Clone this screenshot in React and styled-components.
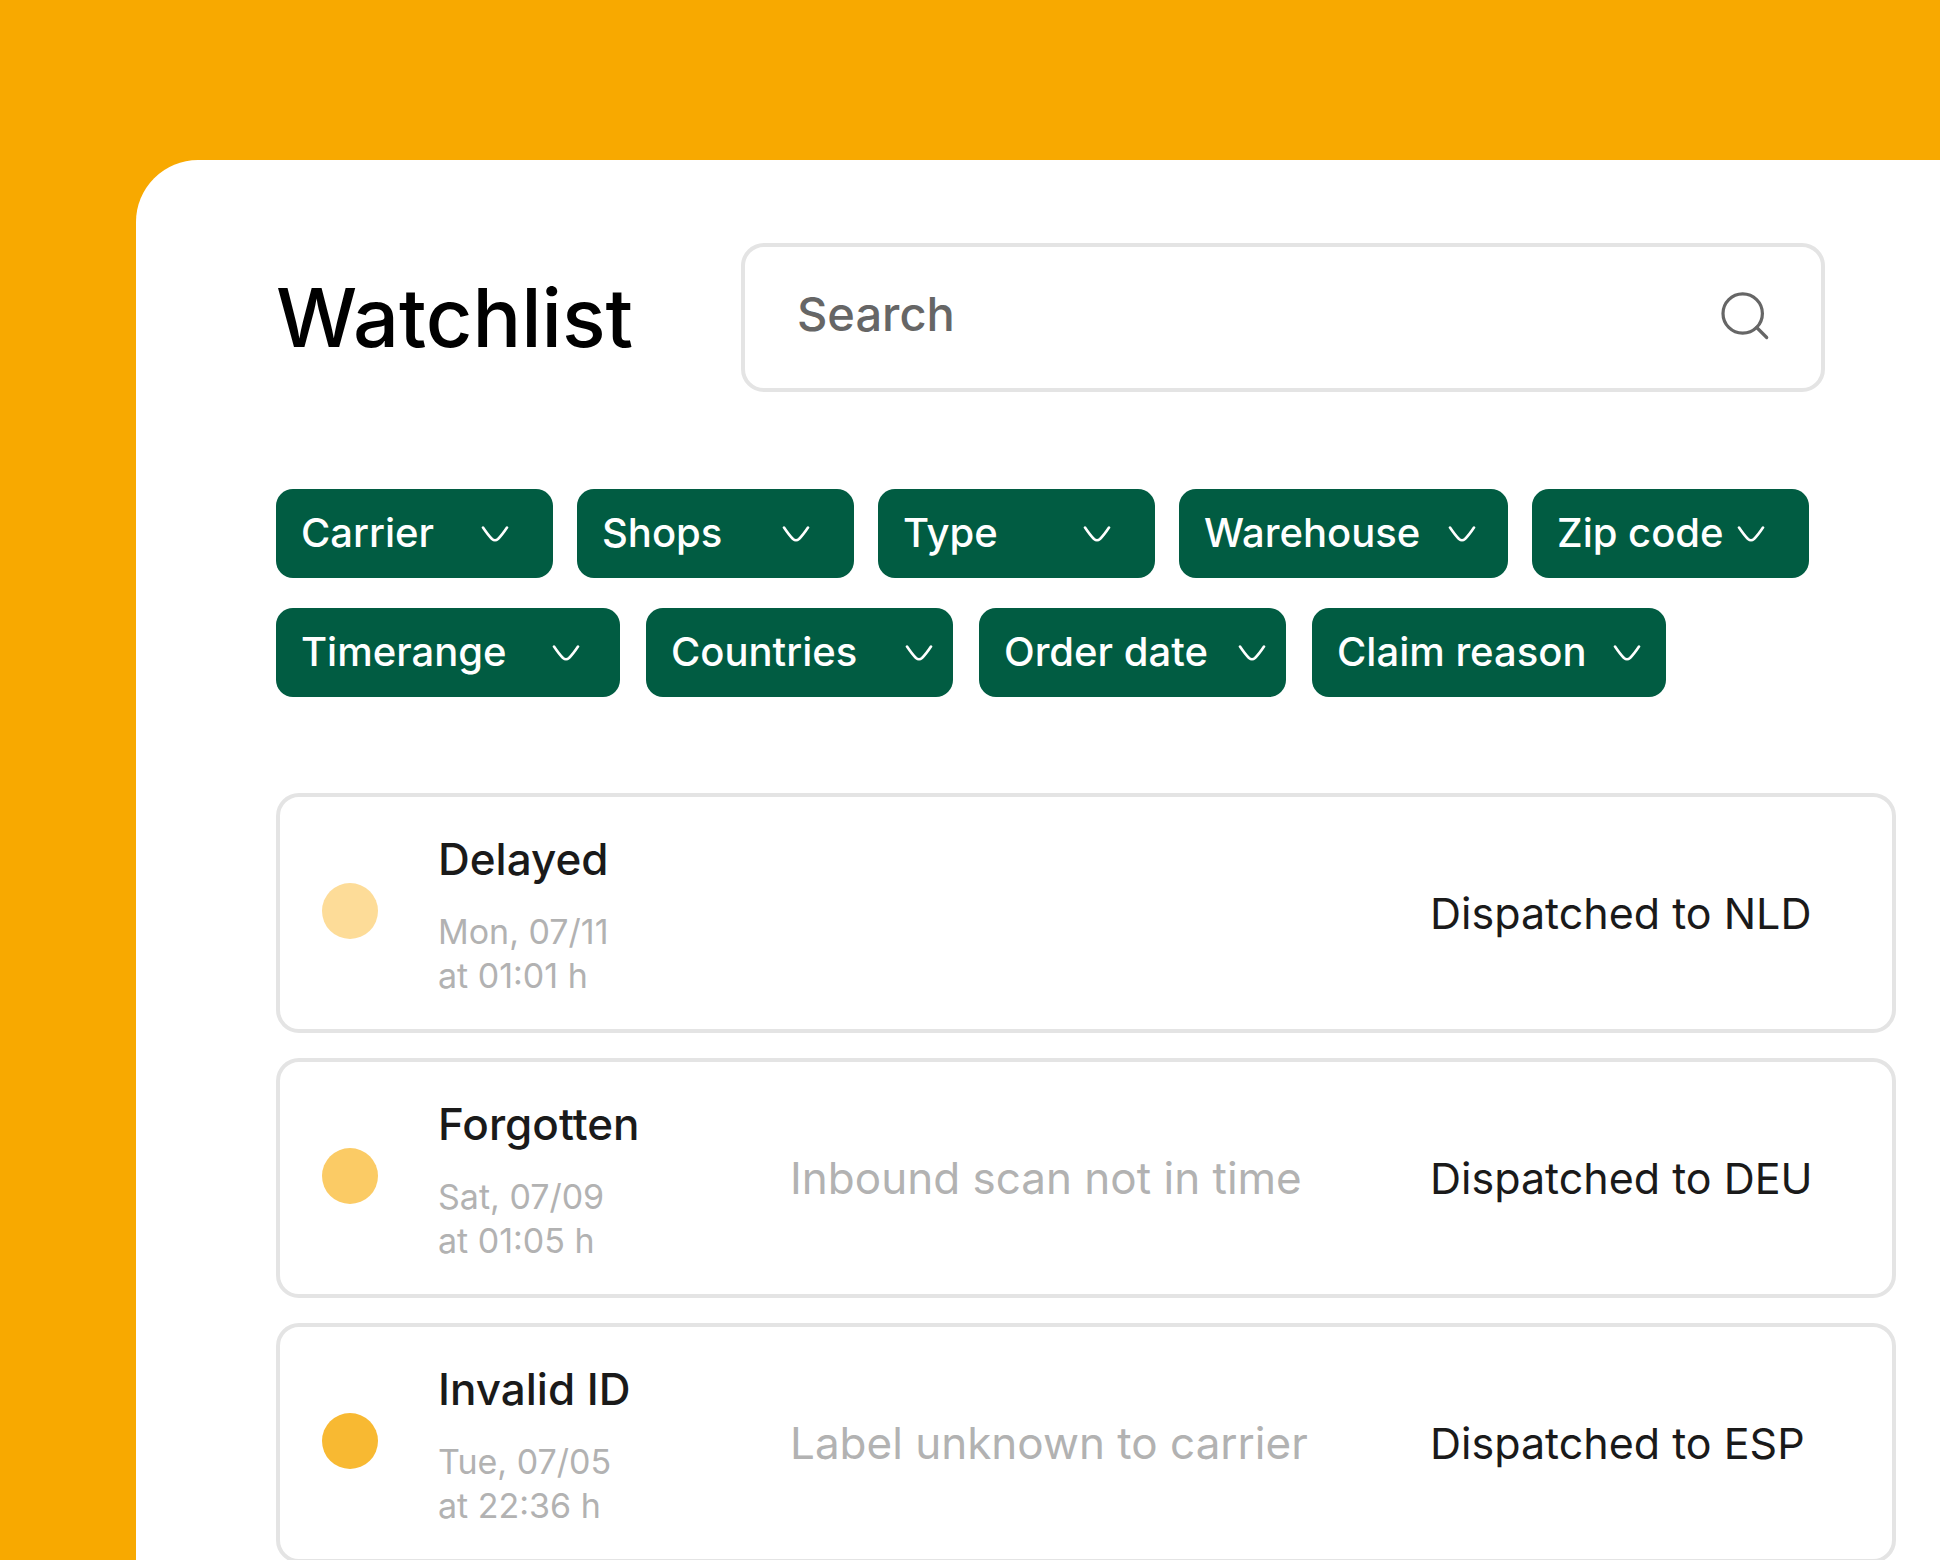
import React, { useState } from 'react'
import styled, { createGlobalStyle } from 'styled-components'

const filterRows = [
  {
    gap: 24,
    items: [
      { label: 'Carrier', width: 277, end: 44 },
      { label: 'Shops', width: 277, end: 44 },
      { label: 'Type', width: 277, end: 44 },
      { label: 'Warehouse', width: 329, end: 32 },
      { label: 'Zip code', width: 277, end: 44 },
    ],
  },
  {
    gap: 26,
    items: [
      { label: 'Timerange', width: 344, end: 40 },
      { label: 'Countries', width: 307, end: 20 },
      { label: 'Order date', width: 307, end: 20 },
      { label: 'Claim reason', width: 354, end: 25 },
    ],
  },
]

const shipments = [
  { status: 'Delayed', day: 'Mon, 07/11', time: 'at 01:01 h', reason: '', target: 'Dispatched to NLD', color: '#fddc98' },
  { status: 'Forgotten', day: 'Sat, 07/09', time: 'at 01:05 h', reason: 'Inbound scan not in time', target: 'Dispatched to DEU', color: '#fbcb65' },
  { status: 'Invalid ID', day: 'Tue, 07/05', time: 'at 22:36 h', reason: 'Label unknown to carrier', target: 'Dispatched to ESP', color: '#f8b932' },
]

const Filter = ({ label, width, end }) => (
  <Chip $width={width} $end={end}>
    <ChipSelect aria-label={label} defaultValue={label}>
      <option>{label}</option>
    </ChipSelect>
    <Chevron viewBox="0 0 28 18" aria-hidden="true">
      <path d="M2 2.5C5 7 8 11 11 14Q14 16.5 17 14C20 11 23 7 26 2.5" />
    </Chevron>
  </Chip>
)

const Shipment = ({ data }) => (
  <Card>
    <Dot $color={data.color} />
    <Info>
      <Status>{data.status}</Status>
      <DateText>
        {data.day}
        <br />
        {data.time}
      </DateText>
    </Info>
    <Reason>{data.reason}</Reason>
    <Target>{data.target}</Target>
  </Card>
)

const App = () => {
  const [query, setQuery] = useState('')
  return (
    <>
      <GlobalStyle />
      <Page>
        <Panel>
          <Header>
            <Title>Watchlist</Title>
            <SearchBox>
              <SearchInput
                type="text"
                aria-label="Search"
                placeholder="Search"
                value={query}
                onChange={(e) => setQuery(e.target.value)}
              />
              <SearchIcon viewBox="0 0 48 48" aria-hidden="true">
                <circle cx="21.7" cy="23.5" r="19.7" />
                <path d="M35.7 37.5L45.7 47.5" />
              </SearchIcon>
            </SearchBox>
          </Header>
          <Filters>
            {filterRows.map((row) => (
              <FilterRow key={row.gap} $gap={row.gap}>
                {row.items.map((item) => (
                  <Filter key={item.label} {...item} />
                ))}
              </FilterRow>
            ))}
          </Filters>
          <List>
            {shipments.map((item) => (
              <Shipment key={item.status} data={item} />
            ))}
          </List>
        </Panel>
      </Page>
    </>
  )
}

export default App

const GlobalStyle = createGlobalStyle`
  * {
    box-sizing: border-box;
  }
  body {
    margin: 0;
    font-family: Inter, 'Open Sans', sans-serif;
    color: #1a1a1a;
  }
`

const Page = styled.div`
  height: 100vh;
  overflow: hidden;
  padding: 160px 0 0 136px;
  background: #f8a900;
`

const Panel = styled.main`
  min-height: 100%;
  padding: 83px 44px 60px 140px;
  border-top-left-radius: 62px;
  background: #fff;
`

const Header = styled.header`
  display: grid;
  grid-template-columns: 465px 1fr;
  align-items: center;
  margin-right: 71px;
`

const Title = styled.h1`
  margin: 0;
  font-size: 81px;
  line-height: 96px;
  font-weight: 500;
  color: #000;
`

const SearchBox = styled.div`
  display: flex;
  align-items: center;
  height: 149px;
  padding: 0 52px 7px;
  border: 4px solid #e4e4e4;
  border-radius: 23px;
`

const SearchInput = styled.input`
  flex: 1;
  min-width: 0;
  padding: 0;
  border: 0;
  outline: 0;
  background: transparent;
  font: inherit;
  font-size: 47px;
  line-height: 56px;
  font-weight: 500;
  color: #666;
  &::placeholder {
    color: #666;
    opacity: 1;
  }
`

const SearchIcon = styled.svg`
  width: 48px;
  height: 48px;
  overflow: visible;
  fill: none;
  stroke: #666;
  stroke-width: 3.2;
  stroke-linecap: round;
`

const Filters = styled.div`
  display: grid;
  gap: 30px;
  margin-top: 97px;
`

const FilterRow = styled.div`
  display: flex;
  flex-wrap: wrap;
  gap: ${(p) => p.$gap}px;
`

const Chip = styled.div`
  display: flex;
  align-items: center;
  width: ${(p) => p.$width}px;
  height: 89px;
  padding: 0 ${(p) => p.$end}px 0 25px;
  border-radius: 17px;
  background: #015c42;
`

const ChipSelect = styled.select`
  flex: 1;
  min-width: 0;
  padding: 0 0 2px;
  border: 0;
  outline: 0;
  appearance: none;
  background: transparent;
  font: inherit;
  font-size: 40px;
  line-height: 48px;
  font-weight: 500;
  color: #fff;
`

const Chevron = styled.svg`
  flex: none;
  width: 28px;
  height: 18px;
  fill: none;
  stroke: #fff;
  stroke-width: 2.6;
  stroke-linecap: round;
  pointer-events: none;
`

const List = styled.ul`
  display: grid;
  gap: 25px;
  margin: 96px 0 0;
  padding: 0;
  list-style: none;
`

const Card = styled.li`
  display: grid;
  grid-template-columns: 116px 352fr 640fr 462fr;
  align-items: center;
  padding: 30px 0 31px 42px;
  border: 4px solid #e4e4e4;
  border-radius: 23px;
`

const Dot = styled.span`
  width: 56px;
  height: 56px;
  margin-bottom: 4px;
  border-radius: 50%;
  background: ${(p) => p.$color};
`

const Info = styled.div`
  padding-top: 6px;
`

const Status = styled.h2`
  margin: 0 0 25px;
  font-size: 44px;
  line-height: 52px;
  font-weight: 500;
`

const DateText = styled.p`
  margin: 0;
  font-size: 34px;
  line-height: 44px;
  font-weight: 400;
  color: #b2b2b2;
`

const Reason = styled.span`
  font-size: 44px;
  line-height: 52px;
  font-weight: 400;
  color: #b2b2b2;
`

const Target = styled.span`
  font-size: 43px;
  line-height: 52px;
  font-weight: 400;
`
